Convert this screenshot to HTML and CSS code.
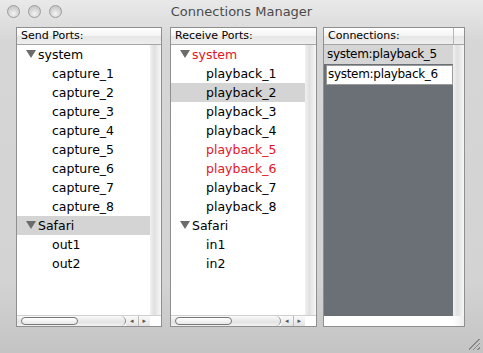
FILE: index.html
```html
<!DOCTYPE html>
<html lang="en">
<head>
    <meta charset="UTF-8">
    <title>Connections Manager</title>
    <link rel="stylesheet" href="styles.css">
</head>
<body>
<div class="window">
    <div class="titlebar">
        <div class="lights">
            <span></span>
            <span></span>
            <span></span>
        </div>
        <div class="title">Connections Manager</div>
    </div>

    <div class="panels">
        <!-- send ports -->
        <div class="panel send">
            <div class="head"><span>Send Ports:</span></div>
            <div class="body">
                <ul class="list">
                    <li class="group"><i class="tri"></i>system</li>
                    <li class="port">capture_1</li>
                    <li class="port">capture_2</li>
                    <li class="port">capture_3</li>
                    <li class="port">capture_4</li>
                    <li class="port">capture_5</li>
                    <li class="port">capture_6</li>
                    <li class="port">capture_7</li>
                    <li class="port">capture_8</li>
                    <li class="group sel"><i class="tri"></i>Safari</li>
                    <li class="port">out1</li>
                    <li class="port">out2</li>
                </ul>
                <div class="vscroll"></div>
            </div>
            <div class="hscroll">
                <div class="track"><div class="thumb"></div></div>
                <div class="arrows"><span>&#9666;</span><span>&#9656;</span></div>
                <div class="corner"></div>
            </div>
        </div>

        <!-- receive ports -->
        <div class="panel recv">
            <div class="head"><span>Receive Ports:</span></div>
            <div class="body">
                <ul class="list">
                    <li class="group red"><i class="tri"></i>system</li>
                    <li class="port">playback_1</li>
                    <li class="port sel">playback_2</li>
                    <li class="port">playback_3</li>
                    <li class="port">playback_4</li>
                    <li class="port red">playback_5</li>
                    <li class="port red">playback_6</li>
                    <li class="port">playback_7</li>
                    <li class="port">playback_8</li>
                    <li class="group"><i class="tri"></i>Safari</li>
                    <li class="port">in1</li>
                    <li class="port">in2</li>
                </ul>
                <div class="vscroll"></div>
            </div>
            <div class="hscroll">
                <div class="track"><div class="thumb"></div></div>
                <div class="arrows"><span>&#9666;</span><span>&#9656;</span></div>
                <div class="corner"></div>
            </div>
        </div>

        <!-- connections -->
        <div class="panel conns">
            <div class="head"><span>Connections:</span><b></b></div>
            <div class="body">
                <div class="clist">
                    <div class="conn">system:playback_5</div>
                    <div class="conn edit">system:playback_6</div>
                </div>
                <div class="vscroll"></div>
            </div>
            <div class="cfoot"></div>
        </div>
    </div>

    <div class="grip"></div>
</div>
</body>
</html>
```

FILE: styles.css
```css
*{
    margin: 0;
    padding: 0;
}
body{
    width: 483px;
    height: 353px;
    overflow: hidden;
    font-family: "DejaVu Sans", "Liberation Sans", sans-serif;
}
.window{
    width: 483px;
    height: 353px;
    background: linear-gradient(#e9e9e9, #d6d6d6 12%, #d3d3d3 80%, #c4c4c4);
    position: relative;
}
.titlebar{
    height: 27px;
    position: relative;
}
.lights{
    display: flex;
    gap: 8px;
    padding: 5px 0 0 7px;
}
.lights span{
    width: 13px;
    height: 13px;
    border-radius: 50%;
    border: 1px solid #9c9c9c;
    box-sizing: border-box;
    background: radial-gradient(circle at 50% 70%, #f4f4f4, #d0d0d0 60%, #bdbdbd);
}
.title{
    position: absolute;
    left: 0;
    right: 0;
    top: 4px;
    text-align: center;
    font-size: 13px;
    color: #4b4b4b;
}
.panels{
    display: flex;
    padding-left: 16px;
}
.panel{
    height: 300px;
    border: 1px solid #8f8f8f;
    box-sizing: border-box;
    background: #fff;
    display: flex;
    flex-direction: column;
}
.send{
    width: 146px;
    margin-right: 8px;
}
.recv{
    width: 147px;
    margin-right: 6px;
}
.conns{
    width: 142px;
}
.head{
    height: 17px;
    box-sizing: border-box;
    border-bottom: 1px solid #a5a5a5;
    background: linear-gradient(#ffffff, #f3f3f3 50%, #e6e6e6 51%, #eeeeee);
    font-size: 11px;
    line-height: 16px;
    padding-left: 4px;
    color: #000;
    display: flex;
}
.head span{
    flex: 1;
}
.head b{
    width: 10px;
    border-left: 1px solid #b5b5b5;
}
.body{
    flex: 1;
    display: flex;
    overflow: hidden;
}
.list{
    flex: 1;
    list-style: none;
    font-size: 12.5px;
}
.list li{
    height: 19px;
    line-height: 19px;
    white-space: nowrap;
}
.list .group{
    padding-left: 9px;
}
.list .port{
    padding-left: 35px;
}
.list .sel{
    background: #d4d4d4;
}
.list .red{
    color: #e5141e;
}
.tri{
    display: inline-block;
    width: 0;
    height: 0;
    border-left: 5px solid transparent;
    border-right: 5px solid transparent;
    border-top: 8px solid #6c6c6c;
    margin-right: 2px;
    vertical-align: 1px;
}
.vscroll{
    width: 11px;
    background: linear-gradient(to right, #f1f1f1, #e0e0e0 40%, #f7f7f7);
}
.hscroll{
    height: 10px;
    display: flex;
    border-top: 1px solid #d0d0d0;
}
.track{
    flex: 1;
    position: relative;
    background: linear-gradient(#fafafa, #e3e3e3 60%, #f2f2f2);
    border-radius: 0 6px 6px 0;
    border-right: 1px solid #8a8a8a;
}
.thumb{
    position: absolute;
    left: 4px;
    top: 1px;
    width: 57px;
    height: 8px;
    box-sizing: border-box;
    border: 1px solid #777;
    border-radius: 5px;
    background: linear-gradient(#ffffff, #e8e8e8);
}
.arrows{
    width: 24px;
    display: flex;
    background: linear-gradient(#fafafa, #e3e3e3);
    font-size: 7px;
    line-height: 10px;
    color: #555;
}
.arrows span{
    flex: 1;
    text-align: center;
}
.arrows span + span{
    border-left: 1px solid #bbb;
}
.corner{
    width: 11px;
    background: #fff;
}
.clist{
    flex: 1;
    background: #6b7076;
}
.conn{
    height: 19px;
    line-height: 18px;
    font-size: 12px;
    letter-spacing: -0.3px;
    padding-left: 3px;
    background: #d5d5d5;
    white-space: nowrap;
}
.conn.edit{
    background: #fff;
    margin: 1px 0 0 2px;
    border: 1px solid #9a9a9a;
    height: 18px;
    line-height: 16px;
    padding-left: 1px;
}
.cfoot{
    height: 10px;
    background: linear-gradient(to right, #fff 92%, #eee);
}
.grip{
    position: absolute;
    right: 3px;
    bottom: 3px;
    width: 11px;
    height: 11px;
    background: linear-gradient(135deg, transparent 45%, #888 45%, #888 52%, transparent 52%, transparent 65%, #888 65%, #888 72%, transparent 72%, transparent 85%, #888 85%, #888 92%, transparent 92%);
}
```
